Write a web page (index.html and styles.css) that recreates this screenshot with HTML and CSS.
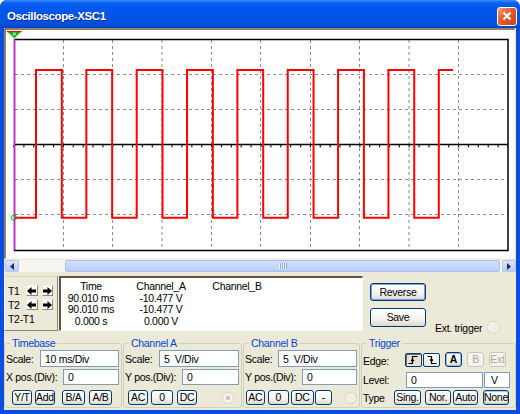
FILE: index.html
```html
<!DOCTYPE html>
<html lang="en">
<head>
    <meta charset="UTF-8">
    <title>Oscilloscope-XSC1</title>
    <link rel="stylesheet" href="styles.css">
</head>
<body>
<div class="window">
    <div class="titlebar">
        <span class="title">Oscilloscope-XSC1</span>
        <span class="close-btn">
            <svg width="10" height="10" viewBox="0 0 10 10"><path d="M1.5 1.5L8.5 8.5M8.5 1.5L1.5 8.5" stroke="#fff" stroke-width="2.2"/></svg>
        </span>
    </div>

    <div class="client">
        <!-- scope screen -->
        <div class="scope">
            <svg class="screen" width="508" height="228" viewBox="6 30 508 228">
                <g fill="none" stroke="#8c8c8c" stroke-width="1" stroke-dasharray="3 3">
                    <path d="M63.5 40V250M112.5 40V250M162 40V250M211.5 40V250M260.5 40V250M310.5 40V250M359.5 40V250M409 40V250M458.5 40V250"/>
                    <path d="M15 74.5H508M15 109.5H508M15 179.5H508M15 214.5H508"/>
                </g>
                <rect x="14.5" y="39.5" width="493.5" height="211" fill="none" stroke="#000" stroke-width="1.5"/>
                <path d="M14 144.5H508" stroke="#000" stroke-width="1.5"/>
                <path d="M13.4 146.2H508" stroke="#000" stroke-width="2" stroke-dasharray="1.2 8.68"/>
                <polyline fill="none" stroke="#ff0000" stroke-width="2"
                    points="14,217.8 36,217.8 36,70 61.8,70 61.8,217.8 86.35,217.8 86.35,70 112.15,70 112.15,217.8 136.7,217.8 136.7,70 162.5,70 162.5,217.8 187.05,217.8 187.05,70 212.85,70 212.85,217.8 237.4,217.8 237.4,70 263.2,70 263.2,217.8 287.75,217.8 287.75,70 313.55,70 313.55,217.8 338.1,217.8 338.1,70 363.9,70 363.9,217.8 388.45,217.8 388.45,70 414.25,70 414.25,217.8 438.8,217.8 438.8,70 453,70"/>
                <path d="M14.5 39V250" stroke="#ff00ff" stroke-width="1.1"/>
                <circle cx="14" cy="217.8" r="2.6" fill="none" stroke="#00c000" stroke-width="1"/>
                <polygon points="7,31 21.5,31 14.3,38.6" fill="#00c000"/>
                <path d="M7 31.6H21.5" stroke="#ff0000" stroke-width="1.4"/>
                <rect x="13" y="32.6" width="2.6" height="2.6" fill="#fff"/>
                <rect x="13.7" y="33.3" width="1.2" height="1.2" fill="#2040c0"/>
            </svg>
        </div>

        <div class="hscroll">
            <span class="sb-btn">
                <svg width="4" height="7" viewBox="0 0 4 7"><path d="M4 0V7L0 3.5Z" fill="#1d2f5c"/></svg>
            </span>
            <div class="sb-track">
                <div class="sb-thumb"><span class="grip"></span></div>
            </div>
            <span class="sb-btn">
                <svg width="4" height="7" viewBox="0 0 4 7"><path d="M0 0V7L4 3.5Z" fill="#1d2f5c"/></svg>
            </span>
        </div>

        <!-- cursor readout -->
        <div class="readout">
            <div class="cursor-box">
                <div class="cur-row">
                    <span class="cur-label">T1</span>
                    <span class="arrow-btn"><svg width="9" height="8" viewBox="0 0 9 8"><path d="M0 4L4.5 0V2.6H9V5.4H4.5V8Z"/></svg></span>
                    <span class="arrow-btn"><svg width="9" height="8" viewBox="0 0 9 8"><path d="M9 4L4.5 0V2.6H0V5.4H4.5V8Z"/></svg></span>
                </div>
                <div class="cur-row">
                    <span class="cur-label">T2</span>
                    <span class="arrow-btn"><svg width="9" height="8" viewBox="0 0 9 8"><path d="M0 4L4.5 0V2.6H9V5.4H4.5V8Z"/></svg></span>
                    <span class="arrow-btn"><svg width="9" height="8" viewBox="0 0 9 8"><path d="M9 4L4.5 0V2.6H0V5.4H4.5V8Z"/></svg></span>
                </div>
                <div class="cur-row diff">
                    <span class="cur-label">T2-T1</span>
                </div>
            </div>

            <div class="data-box">
                <div class="data-grid">
                    <span>Time</span><span>Channel_A</span><span>Channel_B</span>
                    <span>90.010 ms</span><span>-10.477 V</span><span></span>
                    <span>90.010 ms</span><span>-10.477 V</span><span></span>
                    <span>0.000 s</span><span>0.000 V</span><span></span>
                </div>
            </div>

            <div class="readout-btns">
                <button class="btn btn-default">Reverse</button>
                <button class="btn btn-save">Save</button>
            </div>

            <div class="ext-trig">
                <span>Ext. trigger</span>
                <span class="radio"></span>
            </div>
        </div>

        <!-- control groups -->
        <div class="groups">
            <fieldset class="grp grp-time">
                <legend>Timebase</legend>
                <div class="row row-scale">
                    <label class="lbl">Scale:</label>
                    <input class="field" type="text" value="10 ms/Div">
                </div>
                <div class="row row-pos">
                    <label class="lbl lbl-wide">X pos.(Div):</label>
                    <input class="field" type="text" value="0">
                </div>
                <div class="row row-btns tb-btns">
                    <button class="btn sm">Y/T</button>
                    <button class="btn sm">Add</button>
                    <button class="btn sm w23 sep">B/A</button>
                    <button class="btn sm w23">A/B</button>
                </div>
            </fieldset>

            <fieldset class="grp grp-cha">
                <legend>Channel A</legend>
                <div class="row row-scale">
                    <label class="lbl">Scale:</label>
                    <input class="field" type="text" value="5  V/Div">
                </div>
                <div class="row row-pos">
                    <label class="lbl lbl-wide">Y pos.(Div):</label>
                    <input class="field" type="text" value="0">
                </div>
                <div class="row row-btns cha-btns">
                    <button class="btn sm">AC</button>
                    <button class="btn sm w22">0</button>
                    <button class="btn sm">DC</button>
                    <span class="radio dot"></span>
                </div>
            </fieldset>

            <fieldset class="grp grp-chb">
                <legend>Channel B</legend>
                <div class="row row-scale">
                    <label class="lbl lbl-b">Scale:</label>
                    <input class="field" type="text" value="5  V/Div">
                </div>
                <div class="row row-pos">
                    <label class="lbl lbl-wide">Y pos.(Div):</label>
                    <input class="field" type="text" value="0">
                </div>
                <div class="row row-btns chb-btns">
                    <button class="btn sm w19">AC</button>
                    <button class="btn sm w22">0</button>
                    <button class="btn sm w23">DC</button>
                    <button class="btn sm w18">-</button>
                    <span class="radio"></span>
                </div>
            </fieldset>

            <fieldset class="grp grp-trig">
                <legend>Trigger</legend>
                <div class="row trig-edge">
                    <label class="lbl lbl-trig">Edge:</label>
                    <span class="edge-pair">
                        <span class="edge-btn on">
                            <svg width="11" height="10" viewBox="0 0 11 10"><path d="M0.5 8.5H4.5V1.5H9.5M3 6L4.5 4.3L6 6" fill="none" stroke="#000" stroke-width="1.2"/></svg>
                        </span>
                        <span class="edge-btn">
                            <svg width="11" height="10" viewBox="0 0 11 10"><path d="M1.5 1.5H5.5V8.5H10.5M4 4.5L5.5 6.2L7 4.5" fill="none" stroke="#000" stroke-width="1.2"/></svg>
                        </span>
                    </span>
                    <button class="btn src src-a">A</button>
                    <button class="btn src off w15">B</button>
                    <button class="btn src off w22">Ext</button>
                </div>
                <div class="row trig-level">
                    <label class="lbl lbl-trig">Level:</label>
                    <input class="field level" type="text" value="0">
                    <input class="field unit" type="text" value="V">
                </div>
                <div class="row row-btns trig-type">
                    <label class="lbl lbl-type">Type</label>
                    <button class="btn sm w27">Sing.</button>
                    <button class="btn sm w26">Nor.</button>
                    <button class="btn sm w25">Auto</button>
                    <button class="btn sm w26 sel">None</button>
                </div>
            </fieldset>
        </div>
    </div>
</div>
</body>
</html>
```

FILE: styles.css
```css
body {
    margin: 0;
    background: #fff;
    font-family: "Liberation Sans", Arial, sans-serif;
    font-size: 10px;
    letter-spacing: -0.3px;
    color: #000;
}

.window {
    width: 520px;
    height: 414px;
    background: #0a4de0;
    border-radius: 7px 7px 0 0;
    display: flex;
    flex-direction: column;
    overflow: hidden;
}

.titlebar {
    height: 28px;
    box-sizing: border-box;
    padding: 4px 3px 0 7px;
    display: flex;
    align-items: center;
    background: linear-gradient(to bottom, #3d8dff 0%, #0d62f0 10%, #0058ee 22%, #0054e6 60%, #0051df 85%, #003fc6 100%);
    color: #fff;
}

.title {
    flex: 1;
    font-weight: bold;
    font-size: 11.5px;
    letter-spacing: -0.4px;
    text-shadow: 1px 1px 0 #0f2c8c;
}

.close-btn {
    width: 20px;
    height: 19px;
    box-sizing: border-box;
    border: 1px solid #fff;
    border-radius: 3px;
    background: linear-gradient(135deg, #f3a383, #e3602f 40%, #c8401a);
    display: flex;
    align-items: center;
    justify-content: center;
}

.client {
    flex: 1;
    margin: 0 4px 4px;
    background: #ece9d8;
}

/* scope */
.scope {
    width: 511px;
    height: 231px;
    box-sizing: border-box;
    border-style: solid;
    border-width: 2px 1px 1px 2px;
    border-color: #8f8460 #f4f3ee #f4f3ee #8f8460;
    background: #fff;
}

.screen { display: block; }

/* scrollbar */
.hscroll {
    display: flex;
    width: 511px;
    height: 12px;
    margin: 1px 0 0 1px;
}

.sb-btn {
    width: 14px;
    box-sizing: border-box;
    border: 1px solid #b4c8f4;
    border-radius: 2px;
    background: linear-gradient(to bottom, #dbe5fd, #b9cbf8);
    display: flex;
    align-items: center;
    justify-content: center;
}

.sb-track {
    flex: 1;
    display: flex;
    background: #f6f5f0;
}

.sb-thumb {
    margin-left: 46px;
    width: 435px;
    box-sizing: border-box;
    border: 1px solid #a9bff2;
    border-radius: 2px;
    background: linear-gradient(to bottom, #d3defc, #bccef9);
    display: flex;
    align-items: center;
    justify-content: center;
}

.grip {
    width: 8px;
    height: 6px;
    background: repeating-linear-gradient(to right, #eef3ff 0 1px, #8ea9e6 1px 2px);
}

/* readout */
.readout {
    display: flex;
    align-items: flex-start;
    height: 65px;
    box-sizing: border-box;
    padding-top: 4px;
    font-size: 10.5px;
}

.cursor-box {
    width: 54px;
    height: 55px;
    box-sizing: border-box;
    margin-right: 1px;
    padding: 8px 0 0 3px;
    border: 1px solid;
    border-color: #d8d3bd #8e8a77 #8e8a77 #f7f6f1;
}

.cur-row {
    display: flex;
    align-items: center;
    height: 11px;
    margin-bottom: 3px;
}

.cur-row.diff {
    height: 12px;
    margin-top: 1px;
}

.cur-label { width: 19px; }

.cur-row.diff .cur-label { width: auto; }

.arrow-btn {
    width: 12px;
    height: 11px;
    box-sizing: border-box;
    margin-right: 4px;
    border: 1px solid;
    border-color: #f4f2ea #8e8a77 #8e8a77 #f4f2ea;
    background: #fdfdfb;
    display: flex;
    align-items: center;
    justify-content: center;
}

.data-box {
    width: 304px;
    height: 55px;
    box-sizing: border-box;
    border-style: solid;
    border-width: 2px 1px 1px 2px;
    border-color: #5c5747 #fbfaf6 #fbfaf6 #5c5747;
    background: #fff;
    padding-top: 3px;
}

.data-grid {
    display: grid;
    grid-template-columns: 60px 80px 72px;
    grid-auto-rows: 11.7px;
    line-height: 11.7px;
    text-align: center;
}

.readout-btns {
    margin-left: 7px;
    padding-top: 7px;
    width: 56px;
    display: flex;
    flex-direction: column;
    gap: 7px;
}

.btn {
    font-family: inherit;
    font-size: inherit;
    letter-spacing: -0.3px;
    color: #000;
    padding: 0 2px;
    border: 1px solid #003c74;
    border-radius: 3px;
    background: linear-gradient(to bottom, #ffffff 0%, #f4f3ee 60%, #dcd8cc 100%);
    box-sizing: border-box;
    line-height: 1;
}

.btn-default {
    height: 18px;
    box-shadow: inset 0 0 0 1px #7a9cec;
}

.btn-save { height: 19px; }

.ext-trig {
    margin-left: 9px;
    margin-top: 45px;
    display: flex;
    align-items: center;
    gap: 5px;
    line-height: 12px;
}

.radio {
    width: 13px;
    height: 13px;
    box-sizing: border-box;
    border: 1px solid #d6d3c8;
    border-radius: 50%;
    background: radial-gradient(circle at 60% 60%, #eceae2, #f8f7f3);
}

.radio.dot {
    background: radial-gradient(circle, #c9c6bb 0 2px, #f4f3ee 2.5px);
}

/* groups */
.groups {
    display: flex;
    gap: 1px;
    font-size: 10.5px;
}

.grp {
    margin: 0;
    height: 71px;
    box-sizing: border-box;
    padding: 0 2px 2px 1px;
    border: 1px solid #d0d0bf;
    border-radius: 3px;
    min-width: 0;
}

.grp legend {
    margin-left: 4px;
    padding: 0 2px;
    color: #0046d5;
    line-height: 13px;
}

.grp-time { width: 118px; }
.grp-cha { width: 119px; }
.grp-chb { width: 117px; }
.grp-trig { width: 155px; }

.row {
    display: flex;
    align-items: center;
}

.row-scale { height: 17px; }

.row-pos {
    height: 16px;
    margin-top: 2px;
}

.row-btns {
    height: 15px;
    margin-top: 5px;
}

.lbl { width: 34px; white-space: nowrap; }
.lbl-b { width: 33px; }
.lbl-wide { width: 57px; }

.field {
    flex: 1;
    min-width: 0;
    height: 100%;
    box-sizing: border-box;
    border: 1px solid #7f9db9;
    padding: 0 4px;
    font-family: inherit;
    font-size: inherit;
    letter-spacing: -0.3px;
    background: #fff;
    color: #000;
}

.btn.sm {
    height: 15px;
    width: 20px;
    padding: 0;
}

.w15 { width: 15px; }
.btn.sm.w18 { width: 18px; }
.btn.sm.w19 { width: 19px; }
.btn.sm.w22 { width: 22px; }
.btn.sm.w23 { width: 23px; }
.btn.sm.w25 { width: 25px; }
.btn.sm.w26 { width: 26px; }
.btn.sm.w27 { width: 27px; }
.w22 { width: 22px; }

.tb-btns { padding-left: 6px; gap: 3px; }
.tb-btns .sep { margin-left: 4px; }
.tb-btns .btn:last-child { margin-left: 1px; }

.cha-btns { padding-left: 3px; gap: 3px; }
.cha-btns .btn:nth-child(3) { margin-left: 1px; }
.cha-btns .radio { margin-left: 22px; width: 12px; height: 12px; }

.chb-btns { padding-left: 1px; gap: 2px; }
.chb-btns .btn:nth-child(2) { margin-left: 1px; }
.chb-btns .btn:nth-child(4) { margin-left: -1px; }
.chb-btns .radio { margin-left: 11px; width: 12px; height: 12px; }

/* trigger */
.lbl-trig { width: 42px; }
.lbl-type { width: 31px; }

.trig-edge { height: 17px; align-items: flex-end; }

.edge-pair {
    display: flex;
    gap: 1px;
}

.edge-btn {
    width: 17px;
    height: 14px;
    box-sizing: border-box;
    border: 1px solid #003c74;
    border-radius: 2px;
    background: linear-gradient(to bottom, #ffffff, #e8e5da);
    display: flex;
    align-items: center;
    justify-content: center;
}

.edge-btn.on {
    background: #e6e3d6;
    box-shadow: inset 1px 1px 0 #6f6b5c;
}

.btn.src {
    height: 15px;
    width: 17px;
    padding: 0;
    margin-left: 5px;
}

.src-a {
    font-weight: bold;
    box-shadow: inset 0 0 0 1px #9fb4e6;
}

.btn.src.off {
    color: #aca899;
    border-color: #c9c7ba;
    background: #f4f3ee;
}

.trig-level {
    height: 16px;
    margin-top: 5px;
    gap: 1px;
}

.field.level { flex: none; width: 77px; }
.field.unit { flex: none; width: 26px; padding-left: 6px; }

.trig-type { margin-top: 2px; }
.trig-type .btn:nth-child(3) { margin-left: 4px; }
.trig-type .btn:nth-child(4) { margin-left: 2px; }
.trig-type .btn:nth-child(5) { margin-left: 5px; }

.sel { box-shadow: inset 0 0 0 1px #b9c6e4; }
```
